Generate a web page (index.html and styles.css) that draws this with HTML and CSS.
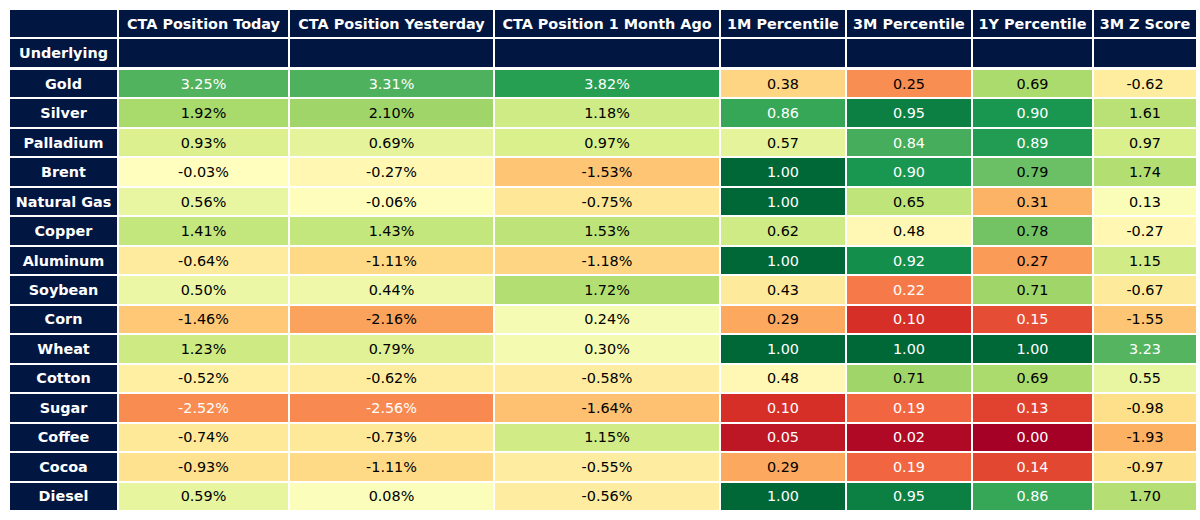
FILE: index.html
```html
<!DOCTYPE html>
<html lang="en">
<head>
<meta charset="utf-8">
<title>CTA Positioning</title>
<link rel="stylesheet" href="styles.css">
</head>
<body>
<div class="table">
  <div class="grid head">
    <div class="h"></div>
    <div class="h">CTA Position Today</div>
    <div class="h">CTA Position Yesterday</div>
    <div class="h">CTA Position 1 Month Ago</div>
    <div class="h">1M Percentile</div>
    <div class="h">3M Percentile</div>
    <div class="h">1Y Percentile</div>
    <div class="h">3M Z Score</div>
    <div class="h">Underlying</div>
    <div class="h"></div><div class="h"></div><div class="h"></div><div class="h"></div><div class="h"></div><div class="h"></div><div class="h"></div>
  </div>
  <div class="grid body">
    <div class="h">Gold</div><div class="c s5">3.25%</div><div class="c s5">3.31%</div><div class="c s5">3.82%</div><div class="c s1">0.38</div><div class="c s1">0.25</div><div class="c s1">0.69</div><div class="c s5">-0.62</div>
    <div class="h">Silver</div><div class="c s5">1.92%</div><div class="c s5">2.10%</div><div class="c s5">1.18%</div><div class="c s1">0.86</div><div class="c s1">0.95</div><div class="c s1">0.90</div><div class="c s5">1.61</div>
    <div class="h">Palladium</div><div class="c s5">0.93%</div><div class="c s5">0.69%</div><div class="c s5">0.97%</div><div class="c s1">0.57</div><div class="c s1">0.84</div><div class="c s1">0.89</div><div class="c s5">0.97</div>
    <div class="h">Brent</div><div class="c s5">-0.03%</div><div class="c s5">-0.27%</div><div class="c s5">-1.53%</div><div class="c s1">1.00</div><div class="c s1">0.90</div><div class="c s1">0.79</div><div class="c s5">1.74</div>
    <div class="h">Natural Gas</div><div class="c s5">0.56%</div><div class="c s5">-0.06%</div><div class="c s5">-0.75%</div><div class="c s1">1.00</div><div class="c s1">0.65</div><div class="c s1">0.31</div><div class="c s5">0.13</div>
    <div class="h">Copper</div><div class="c s5">1.41%</div><div class="c s5">1.43%</div><div class="c s5">1.53%</div><div class="c s1">0.62</div><div class="c s1">0.48</div><div class="c s1">0.78</div><div class="c s5">-0.27</div>
    <div class="h">Aluminum</div><div class="c s5">-0.64%</div><div class="c s5">-1.11%</div><div class="c s5">-1.18%</div><div class="c s1">1.00</div><div class="c s1">0.92</div><div class="c s1">0.27</div><div class="c s5">1.15</div>
    <div class="h">Soybean</div><div class="c s5">0.50%</div><div class="c s5">0.44%</div><div class="c s5">1.72%</div><div class="c s1">0.43</div><div class="c s1">0.22</div><div class="c s1">0.71</div><div class="c s5">-0.67</div>
    <div class="h">Corn</div><div class="c s5">-1.46%</div><div class="c s5">-2.16%</div><div class="c s5">0.24%</div><div class="c s1">0.29</div><div class="c s1">0.10</div><div class="c s1">0.15</div><div class="c s5">-1.55</div>
    <div class="h">Wheat</div><div class="c s5">1.23%</div><div class="c s5">0.79%</div><div class="c s5">0.30%</div><div class="c s1">1.00</div><div class="c s1">1.00</div><div class="c s1">1.00</div><div class="c s5">3.23</div>
    <div class="h">Cotton</div><div class="c s5">-0.52%</div><div class="c s5">-0.62%</div><div class="c s5">-0.58%</div><div class="c s1">0.48</div><div class="c s1">0.71</div><div class="c s1">0.69</div><div class="c s5">0.55</div>
    <div class="h">Sugar</div><div class="c s5">-2.52%</div><div class="c s5">-2.56%</div><div class="c s5">-1.64%</div><div class="c s1">0.10</div><div class="c s1">0.19</div><div class="c s1">0.13</div><div class="c s5">-0.98</div>
    <div class="h">Coffee</div><div class="c s5">-0.74%</div><div class="c s5">-0.73%</div><div class="c s5">1.15%</div><div class="c s1">0.05</div><div class="c s1">0.02</div><div class="c s1">0.00</div><div class="c s5">-1.93</div>
    <div class="h">Cocoa</div><div class="c s5">-0.93%</div><div class="c s5">-1.11%</div><div class="c s5">-0.55%</div><div class="c s1">0.29</div><div class="c s1">0.19</div><div class="c s1">0.14</div><div class="c s5">-0.97</div>
    <div class="h">Diesel</div><div class="c s5">0.59%</div><div class="c s5">0.08%</div><div class="c s5">-0.56%</div><div class="c s1">1.00</div><div class="c s1">0.95</div><div class="c s1">0.86</div><div class="c s5">1.70</div>
  </div>
</div>
<script src="script.js"></script>
</body>
</html>
```

FILE: styles.css
```css
html, body {
  margin: 0;
  padding: 0;
  background: #ffffff;
}

body {
  font-family: "DejaVu Sans", "Noto Sans", sans-serif;
  font-size: 14.4px;
  color: #000000;
}

.table {
  padding: 10px 0 0 10px;
}

.grid {
  display: grid;
  grid-template-columns: 107px 169px 203px 224px 124px 124px 119px 102px;
  gap: 2px;
}

.head {
  grid-template-rows: 27px 28px;
}

.body {
  margin-top: 3px;
  grid-auto-rows: 27.47px;
}

.h {
  background: #011640;
  color: #ffffff;
  font-weight: bold;
  display: flex;
  align-items: center;
  justify-content: center;
  white-space: nowrap;
}

.c {
  display: flex;
  align-items: center;
  justify-content: center;
  white-space: nowrap;
  background: #ffffbf;
  color: #000000;
}

.c.light {
  color: #ffffff;
}
```

FILE: script.js
```js
(function () {
  var stops = ['#a50026', '#d73027', '#f46d43', '#fdae61', '#fee08b', '#ffffbf',
               '#d9ef8b', '#a6d96a', '#66bd63', '#1a9850', '#006837'];
  var rgb = stops.map(function (h) {
    return [parseInt(h.substr(1, 2), 16), parseInt(h.substr(3, 2), 16), parseInt(h.substr(5, 2), 16)];
  });

  function cmap(t) {
    var i = Math.floor(t * 256);
    if (i < 0) i = 0;
    if (i > 255) i = 255;
    var x = (i / 255) * 10;
    var k = Math.min(9, Math.floor(x));
    var f = x - k;
    var a = rgb[k], b = rgb[k + 1];
    return [0, 1, 2].map(function (j) { return a[j] + (b[j] - a[j]) * f; });
  }

  function lum(c) {
    var l = c.map(function (v) {
      v = v / 255;
      return v <= 0.04045 ? v / 12.92 : Math.pow((v + 0.055) / 1.055, 2.4);
    });
    return 0.2126 * l[0] + 0.7152 * l[1] + 0.0722 * l[2];
  }

  var cells = document.querySelectorAll('.c');
  cells.forEach(function (el) {
    var v = parseFloat(el.textContent);
    var t = el.classList.contains('s1') ? v : (v + 5) / 10;
    var c = cmap(t);
    el.style.background = 'rgb(' + c.map(function (v) { return Math.round(v); }).join(',') + ')';
    if (lum(c) < 0.396) el.classList.add('light');
  });
})();
```
